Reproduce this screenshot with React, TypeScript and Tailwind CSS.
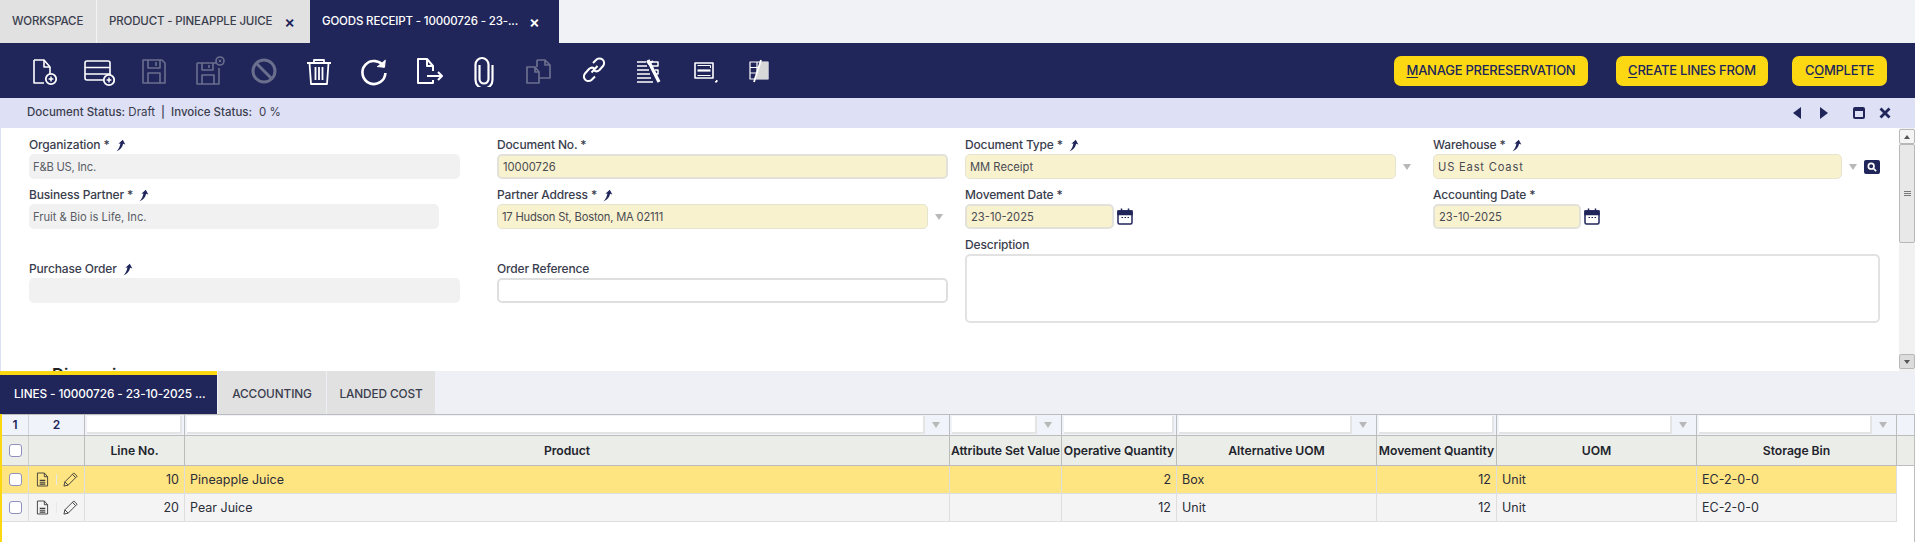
import type { ReactNode } from 'react'

const ACTIVE = '#ffffff'
const MUTED = '#6b6f8e'

function ToolIcon({ children, color = ACTIVE, width = 2 }: { children: ReactNode; color?: string; width?: number }) {
  return (
    <div className="flex h-full w-[55px] items-center justify-center">
      <svg viewBox="0 0 32 32" className="h-8 w-8" fill="none" stroke={color} strokeWidth={width} strokeLinejoin="round">
        {children}
      </svg>
    </div>
  )
}

function PlusBadge({ cx, cy }: { cx: number; cy: number }) {
  return (
    <>
      <circle cx={cx} cy={cy} r="5.2" fill="#20255a" strokeWidth="1.8" />
      <path d={`M${cx - 2.4} ${cy}h4.8M${cx} ${cy - 2.4}v4.8`} strokeWidth="1.5" />
    </>
  )
}

function Toolbar() {
  return (
    <div className="flex h-[55px] items-center bg-[#20255a] pl-[16px]">
      <ToolIcon>
        <path d="M6 5h10l6 7v8M6 5v23h10" strokeWidth="1.6" />
        <path d="M16 5v7h6" strokeWidth="1.6" />
        <PlusBadge cx={23} cy={24} />
      </ToolIcon>
      <ToolIcon>
        <rect x="2" y="6" width="25" height="19" rx="2" strokeWidth="1.6" />
        <path d="M2 12.5h25M2 19h25" strokeWidth="1.6" />
        <PlusBadge cx={26} cy={25} />
      </ToolIcon>
      <ToolIcon color={MUTED} width={1.6}>
        <path d="M5 5h19l3 3v20H5z" />
        <path d="M10 5v8h12V5M18 7v4M10 28V18h12v10" />
      </ToolIcon>
      <ToolIcon color={MUTED} width={1.6}>
        <path d="M4 8h19v-1M4 8v21h22V13" />
        <path d="M9 8v7h11V8M16 10v3M9 29V20h12v9" />
        <circle cx="27" cy="6" r="4" fill="#20255a" />
        <path d="M25.7 4.7l2.6 2.6M28.3 4.7l-2.6 2.6" strokeWidth="1" />
      </ToolIcon>
      <ToolIcon color={MUTED} width={3}>
        <circle cx="16" cy="16" r="11" />
        <path d="M8.5 8.5l15 15" />
      </ToolIcon>
      <ToolIcon width={1.8}>
        <path d="M4 8h24M11 8V5h10v3M6.5 8l1.5 21h16l1.5-21M12.5 12v13M16 12v13M19.5 12v13" />
      </ToolIcon>
      <ToolIcon width={2.6}>
        <path d="M26 12a11.5 11.5 0 1 0 1.4 6" />
        <path d="M19 11.5l7.5.8.8-7.5" fill="#ffffff" strokeWidth="1" />
      </ToolIcon>
      <ToolIcon width={2}>
        <path d="M20 25v3H5V4h9l6 7v5M14 4v7h6" />
        <path d="M14 21h15M25 17l4 4-4 4" />
      </ToolIcon>
      <ToolIcon width={2.2}>
        <path d="M20.5 11v13a4.5 4.5 0 0 1-9 0V10" />
        <path d="M24.5 22v3a8.5 8.5 0 0 1-17 0V9.5a6.5 6.5 0 0 1 13 0V11" />
        <path d="M24.5 10v12" />
      </ToolIcon>
      <ToolIcon color={MUTED} width={1.7}>
        <path d="M4 12h8l4 5v11H4zM12 12v5h4" />
        <path d="M14 5h8l5 5v13H16M22 5v5h5M14 5v7" />
      </ToolIcon>
      <ToolIcon width={2}>
        <path d="M13.5 17.5l6-6.5M15 8l3-3a4.5 4.5 0 0 1 7 6l-3.5 4a4.5 4.5 0 0 1-6 0" />
        <path d="M17 14a4.5 4.5 0 0 0-6 0l-4 4.5a4.5 4.5 0 0 0 7 6l3-3" />
      </ToolIcon>
      <ToolIcon width={1.5}>
        <path d="M4 7h9M17 7h8v4h-8M4 11h10M4 15h12M22 15h3v4h-3M4 19h13M4 23h14M4 27h16" />
        <path d="M15 5l11 22" strokeWidth="3.2" />
        <path d="M20 6l-4 3-2-3" strokeWidth="2" />
      </ToolIcon>
      <ToolIcon width={1.6}>
        <rect x="7" y="8" width="18" height="15" />
        <path d="M9.5 15.5h13" strokeWidth="2.2" />
        <path d="M9.5 10.5h13v2.5M9.5 20.5h13" strokeWidth="1" />
        <path d="M27 27h2v-2z" fill="#ffffff" stroke="#ffffff" strokeWidth="1" />
      </ToolIcon>
      <ToolIcon width={1.2}>
        <rect x="7" y="7" width="18" height="17" />
        <path d="M7 12.5h18M7 18h18M14 7v17" />
        <path d="M17 7h8v17H13z" fill="#d8d8d8" stroke="none" />
        <path d="M18 5l-7 22" stroke="#ffffff" strokeWidth="1.8" />
      </ToolIcon>
    </div>
  )
}

function YellowButton({ first, rest, before = '', className }: { first: string; rest: string; before?: string; className: string }) {
  return (
    <button className={`flex h-[30px] items-center justify-center rounded-[7px] bg-[#fcd813] text-[13px] font-medium tracking-[-0.25px] text-[#20255a] ${className}`}>
      {before}
      <span className="underline underline-offset-2">{first}</span>
      {rest}
    </button>
  )
}

function FieldLink() {
  return (
    <svg viewBox="0 0 10 12" className="ml-[6px] h-[13px] w-[10px]" fill="#20255a">
      <path d="M0.5 11.8C3 9.5 4 6.5 4.4 4L2.4 4.3 6.8.2l2.5 4.8-2.2-.8C6.4 7.5 4.5 10.5 0.5 11.8z" />
    </svg>
  )
}

function Label({ text, link }: { text: string; link?: boolean }) {
  return (
    <div className="flex h-[18px] items-center text-[12px] font-medium tracking-[-0.15px] text-[#3a3d4d]">
      {text}
      {link && <FieldLink />}
    </div>
  )
}

function DropArrow({ color = '#b8b8b8' }: { color?: string }) {
  return <div className="h-0 w-0 border-x-[4.5px] border-t-[6px] border-x-transparent" style={{ borderTopColor: color }} />
}

function Field({
  label, link, value, tone, width, top = 7, arrow, thick, after, spacing = '',
}: {
  label: string
  link?: boolean
  value?: string
  tone: 'gray' | 'yellow' | 'white'
  width: string
  top?: number
  arrow?: boolean
  thick?: boolean
  after?: ReactNode
  spacing?: string
}) {
  const toneClass =
    tone === 'gray'
      ? 'bg-[#f1f1f1] text-[#5a5d66]'
      : tone === 'yellow'
        ? `bg-[#f9f2cf] text-[#494b52] ${thick ? 'border-2 border-[#e2e2da]' : 'border border-[#e6e4cf]'}`
        : 'border-2 border-[#dfdfdf] bg-white'
  return (
    <div style={{ marginTop: top }}>
      <Label text={label} link={link} />
      <div className="flex items-center">
        <div className={`flex h-[25px] items-center rounded-[5px] pl-[4px] pt-px text-[11.2px] ${spacing} ${toneClass} ${width}`}>{value}</div>
        {arrow && (
          <div className="ml-[5px] flex w-[12px] justify-center">
            <DropArrow />
          </div>
        )}
        {after}
      </div>
    </div>
  )
}

function Calendar() {
  return (
    <svg viewBox="0 0 16 17" className="ml-[3px] h-[17px] w-[16px]" fill="none" stroke="#20255a" strokeWidth="1.5">
      <rect x="1" y="3" width="14" height="13" rx="1.5" />
      <path d="M1 3h14v3.5H1z" fill="#20255a" />
      <path d="M4.5 0.5v3M11.5 0.5v3" />
      <path d="M4.5 9.5h1.5M7.5 9.5h1.5M10.5 9.5h1.5" strokeWidth="1.2" />
    </svg>
  )
}

function SearchButton() {
  return (
    <div className="ml-[5px] flex h-[14px] w-[16px] items-center justify-center rounded-[2px] bg-[#20255a]">
      <svg viewBox="0 0 12 12" className="h-[10px] w-[10px]" fill="none" stroke="#ffffff" strokeWidth="2">
        <circle cx="5" cy="5" r="3.4" />
        <path d="M7.5 7.5L11 11" />
      </svg>
    </div>
  )
}

function Scrollbar() {
  return (
    <div className="flex w-[16px] flex-col bg-[#f1f1f1] pb-[2px] pt-[1px]">
      <div className="flex h-[15px] items-center justify-center rounded-[2px] border border-[#b8b8b8] bg-[#f4f4f4]">
        <div className="h-0 w-0 border-x-[3.5px] border-b-[4px] border-x-transparent border-b-[#555555]" />
      </div>
      <div className="flex h-[99px] flex-col items-center justify-center gap-[1px] rounded-[2px] border border-[#b8b8b8] bg-[#e8e8e8]">
        <div className="h-px w-[7px] bg-[#777777]" />
        <div className="h-px w-[7px] bg-[#777777]" />
        <div className="h-px w-[7px] bg-[#777777]" />
      </div>
      <div className="flex-1" />
      <div className="flex h-[15px] items-center justify-center rounded-[2px] border border-[#b8b8b8] bg-[#dcdcdc]">
        <div className="h-0 w-0 border-x-[3.5px] border-t-[4px] border-x-transparent border-t-[#555555]" />
      </div>
    </div>
  )
}

function Form() {
  return (
    <div className="flex h-[243px] overflow-hidden border-l border-[#dee0f6] bg-white">
      <div className="flex-1 overflow-hidden pl-[28px]">
        <div className="grid grid-cols-[468px_468px_468px_1fr]">
          <div>
            <Field top={8} label="Organization *" link value="F&B US, Inc." tone="gray" width="w-[431px]" spacing="tracking-[-0.2px]" />
            <Field label="Business Partner *" link value="Fruit & Bio is Life, Inc." tone="gray" width="w-[410px]" />
            <Field top={31} label="Purchase Order" link tone="gray" width="w-[431px]" />
          </div>
          <div>
            <Field top={8} label="Document No. *" value="10000726" tone="yellow" thick width="w-[451px]" />
            <Field label="Partner Address *" link value="17 Hudson St, Boston, MA 02111" tone="yellow" width="w-[431px]" arrow spacing="tracking-[-0.2px]" />
            <Field top={31} label="Order Reference" tone="white" width="w-[451px]" />
          </div>
          <div>
            <Field top={8} label="Document Type *" link value="MM Receipt" tone="yellow" width="w-[431px]" arrow />
            <Field label="Movement Date *" value="23-10-2025" tone="yellow" thick width="w-[149px]" after={<Calendar />} />
            <div className="mt-[7px]">
              <Label text="Description" />
              <div className="h-[69px] w-[915px] rounded-[5px] border-2 border-[#e2e2e2] bg-white" />
            </div>
          </div>
          <div>
            <Field top={8} label="Warehouse *" link value="US East Coast" tone="yellow" width="w-[409px]" arrow after={<SearchButton />} spacing="tracking-[0.8px]" />
            <Field label="Accounting Date *" value="23-10-2025" tone="yellow" thick width="w-[148px]" after={<Calendar />} />
          </div>
        </div>
        <h2 className="ml-[23px] mt-[39px] text-[16.5px] font-semibold text-[#222222]">Dimensions</h2>
      </div>
      <Scrollbar />
    </div>
  )
}

const gridCols = 'grid grid-cols-[27px_56px_100px_765px_112px_115px_200px_120px_200px_200px_1fr]'

function Check() {
  return <div className="h-[13px] w-[13px] rounded-[3px] border border-[#8f8fc0] bg-white" />
}

function FilterCell({ arrow }: { arrow?: boolean }) {
  return (
    <div className="flex h-full items-center border-r border-[#bdbdbd] bg-[#f0f3f9] px-[2px]">
      <div className="h-[18px] flex-1 border-b-2 border-r-2 border-[#e4e4e4] bg-white" />
      {arrow && (
        <div className="flex w-[22px] justify-center">
          <DropArrow />
        </div>
      )}
    </div>
  )
}

function HeadCell({ children }: { children?: ReactNode }) {
  return (
    <div className="flex items-center justify-center overflow-hidden whitespace-nowrap border-r border-[#bcbcbc] pt-px text-[12.2px] font-semibold tracking-[-0.05px] text-[#22242c]">
      {children}
    </div>
  )
}

function BodyCell({ children, right }: { children?: ReactNode; right?: boolean }) {
  return (
    <div className={`flex items-center border-b border-r border-[#dedede] px-[5px] pt-px text-[12.5px] text-[#2b2d38] ${right ? 'justify-end' : ''}`}>
      {children}
    </div>
  )
}

function Row({ bg, values }: { bg: string; values: string[] }) {
  const [line, product, attr, op, alt, move, uom, bin] = values
  return (
    <div className={`${gridCols} h-[28px] ${bg}`}>
      <div className="flex items-center justify-center border-b border-r border-[#dedede]">
        <Check />
      </div>
      <div className="flex items-center border-b border-r border-[#dedede] pl-[7px]">
        <svg viewBox="0 0 14 16" className="h-[15px] w-[13px]" fill="none" stroke="#3c3c3c" strokeWidth="1">
          <path d="M1.5 1h7.5l3.5 4v10h-11zM9 1v4h3.5" />
          <path d="M4 9h6M4 11h6M4 13h6" strokeWidth="1.2" />
        </svg>
        <div className="ml-[7px] h-[11px] w-px bg-[#e8e8e8]" />
        <svg viewBox="0 0 16 16" className="ml-[6px] h-[15px] w-[15px]" fill="none" stroke="#3c3c3c" strokeWidth="1">
          <path d="M1 15l1-4.5L11.5 1l3.5 3.5L5.500 14zM2 10.500L5.500 14M10 2.500L13.500 6" />
        </svg>
      </div>
      <BodyCell right>{line}</BodyCell>
      <BodyCell>{product}</BodyCell>
      <BodyCell>{attr}</BodyCell>
      <BodyCell right>{op}</BodyCell>
      <BodyCell>{alt}</BodyCell>
      <BodyCell right>{move}</BodyCell>
      <BodyCell>{uom}</BodyCell>
      <BodyCell>{bin}</BodyCell>
      <div className="bg-white" />
    </div>
  )
}

function LinesGrid() {
  return (
    <div className="flex-1 border-l-2 border-r border-l-[#fcd813] border-r-[#bdbdbd] bg-white">
      <div className={`${gridCols} h-[22px] border-y border-[#bcbcbc]`}>
        <div className="flex items-center justify-center border-r border-[#cfd4dc] bg-[#f0f3f9] text-[12px] font-semibold text-[#20255a]">1</div>
        <div className="flex items-center justify-center border-r border-[#bcbcbc] bg-[#f0f3f9] text-[12px] font-semibold text-[#20255a]">2</div>
        <FilterCell />
        <FilterCell arrow />
        <FilterCell arrow />
        <FilterCell />
        <FilterCell arrow />
        <FilterCell />
        <FilterCell arrow />
        <FilterCell arrow />
        <div className="bg-[#f0f3f9]" />
      </div>
      <div className={`${gridCols} h-[30px] border-b border-[#bcbcbc] bg-[#ebede8]`}>
        <div className="flex items-center justify-center border-r border-[#cfcfcf]">
          <Check />
        </div>
        <HeadCell />
        <HeadCell>Line No.</HeadCell>
        <HeadCell>Product</HeadCell>
        <HeadCell>Attribute Set Value</HeadCell>
        <HeadCell>Operative Quantity</HeadCell>
        <HeadCell>Alternative UOM</HeadCell>
        <HeadCell>Movement Quantity</HeadCell>
        <HeadCell>UOM</HeadCell>
        <HeadCell>Storage Bin</HeadCell>
        <div />
      </div>
      <Row bg="bg-[#ffe482]" values={['10', 'Pineapple Juice', '', '2', 'Box', '12', 'Unit', 'EC-2-0-0']} />
      <Row bg="bg-[#f4f4f4]" values={['20', 'Pear Juice', '', '12', 'Unit', '12', 'Unit', 'EC-2-0-0']} />
    </div>
  )
}

export default function App() {
  return (
    <div className="flex h-[542px] w-[1915px] flex-col overflow-hidden bg-white font-['Inter',sans-serif]">
      {/* Window tabs */}
      <div className="flex h-[43px] bg-[#f1f2f6] text-[11.5px] font-medium tracking-[-0.15px]">
        <div className="flex w-[97px] items-center border-r border-[#f4f4f4] bg-[#e1e1e1] pl-[12px] text-[#3a3d4d]">WORKSPACE</div>
        <div className="flex w-[213px] items-center bg-[#e1e1e1] pl-[12px] text-[#3a3d4d]">
          PRODUCT - PINEAPPLE JUICE
          <span className="ml-[12px] text-[16px] font-semibold leading-none text-[#20255a]">×</span>
        </div>
        <div className="flex w-[249px] items-center bg-[#20255a] pl-[12px] text-white">
          GOODS RECEIPT - 10000726 - 23-...
          <span className="ml-[11px] text-[16px] font-semibold leading-none">×</span>
        </div>
      </div>

      {/* Toolbar with process buttons */}
      <div className="flex h-[55px] items-center justify-between bg-[#20255a] pr-[28px]">
        <Toolbar />
        <div className="flex items-center">
          <YellowButton first="M" rest="ANAGE PRERESERVATION" className="w-[194px]" />
          <YellowButton first="C" rest="REATE LINES FROM" className="ml-[28px] w-[152px]" />
          <YellowButton before="C" first="O" rest="MPLETE" className="ml-[24px] w-[95px]" />
        </div>
      </div>

      {/* Status bar */}
      <div className="flex h-[30px] items-center justify-between bg-[#dee0f6] pl-[27px] pr-[24px] text-[11.5px] text-[#3a3d4d]">
        <div>
          <span className="font-medium">Document Status:</span> Draft
          <span className="mx-[6px] font-medium">|</span>
          <span className="font-medium">Invoice Status:</span>
          <span className="ml-[7px]">0 %</span>
        </div>
        <div className="flex items-center text-[#20255a]">
          <div className="h-0 w-0 border-y-[6px] border-r-[8px] border-y-transparent border-r-[#20255a]" />
          <div className="ml-[19px] h-0 w-0 border-y-[6px] border-l-[8px] border-y-transparent border-l-[#20255a]" />
          <div className="ml-[25px] h-[12px] w-[12px] rounded-[2px] border-2 border-t-[4px] border-[#20255a] bg-[#dee0f6]" />
          <svg viewBox="0 0 12 12" className="ml-[14px] h-[12px] w-[12px]" fill="none" stroke="#20255a" strokeWidth="2.8">
            <path d="M1.5 1.5l9 9M10.5 1.5l-9 9" />
          </svg>
        </div>
      </div>

      <Form />

      {/* Child tabs */}
      <div className="flex h-[43px] bg-[#eff0f5] text-[11.8px] font-medium tracking-[-0.1px]">
        <div className="flex w-[217px] items-center border-t-4 border-[#fcd813] bg-[#20255a] pl-[14px] text-white">LINES - 10000726 - 23-10-2025 ...</div>
        <div className="ml-px flex w-[108px] items-center justify-center bg-[#e1e1e1] pt-[4px] text-[#3a3d4d]">ACCOUNTING</div>
        <div className="ml-px flex w-[108px] items-center justify-center bg-[#e1e1e1] pt-[4px] text-[#3a3d4d]">LANDED COST</div>
      </div>

      <LinesGrid />
    </div>
  )
}
